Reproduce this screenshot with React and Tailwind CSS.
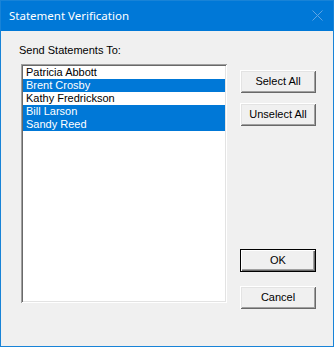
import React, { useState } from 'react'

const people = [
  { name: 'Patricia Abbott', sel: false },
  { name: 'Brent Crosby', sel: true },
  { name: 'Kathy Fredrickson', sel: false },
  { name: 'Bill Larson', sel: true },
  { name: 'Sandy Reed', sel: true },
]

function Btn({ children, def, className = '' }){
  const edge = def
    ? 'border border-[#000] shadow-[inset_1px_1px_0_#fff,inset_-1px_-1px_0_#696969,inset_-2px_-2px_0_#a0a0a0]'
    : 'shadow-[inset_1px_1px_0_#fff,inset_-1px_-1px_0_#696969,inset_2px_2px_0_#e3e3e3,inset_-2px_-2px_0_#a0a0a0]'
  return (
    <button className={`w-[76px] h-[23px] bg-[#f0f0f0] text-black text-[11px] leading-[13px] flex items-center justify-center ${edge} ${className}`}>
      {children}
    </button>
  )
}

export default function App(){
  const [rows, setRows] = useState(people)

  function toggle(i){
    setRows(r => r.map((p, j) => j === i ? { ...p, sel: !p.sel } : p))
  }

  return (
    <div className="w-[334px] h-[347px] flex flex-col border border-[#1883d7] bg-[#f0f0f0] font-['Liberation_Sans',Arial,sans-serif]">
      <div className="h-[30px] bg-[#0078d7] flex items-center justify-between pl-[8px] pr-[10px]">
        <span className="text-white text-[11.5px] font-['Noto_Sans',sans-serif] -mt-[1px]">Statement Verification</span>
        <svg width="11" height="11" viewBox="0 0 11 11" className="-mt-[1px]">
          <path d="M0.5 0.5L10.5 10.5M10.5 0.5L0.5 10.5" stroke="#5fa4e3" strokeWidth="1" />
        </svg>
      </div>
      <div className="flex-1 flex pl-[20px] pr-[16px]">
        <div className="flex flex-col">
          <div className="mt-[13px] h-[13px] text-[11px] leading-[13px] text-black -ml-[2px]">Send Statements To:</div>
          <div className="mt-[7px] w-[206px] h-[239px] bg-white p-[2px] shadow-[inset_1px_1px_0_#a0a0a0,inset_-1px_-1px_0_#fff,inset_2px_2px_0_#696969,inset_-2px_-2px_0_#e3e3e3]">
            {rows.map((p, i) => (
              <div
                key={p.name}
                onClick={() => toggle(i)}
                className={`h-[13px] pl-[3px] text-[11px] leading-[13px] whitespace-nowrap ${p.sel ? 'bg-[#0078d7] text-white' : 'text-black'}`}
              >
                {p.name}
              </div>
            ))}
          </div>
        </div>
        <div className="ml-[13px] flex flex-col">
          <Btn className="mt-[39px]">Select All</Btn>
          <Btn className="mt-[10px]">Unselect All</Btn>
          <Btn def className="mt-[123px]">OK</Btn>
          <Btn className="mt-[14px]">Cancel</Btn>
        </div>
      </div>
    </div>
  )
}
